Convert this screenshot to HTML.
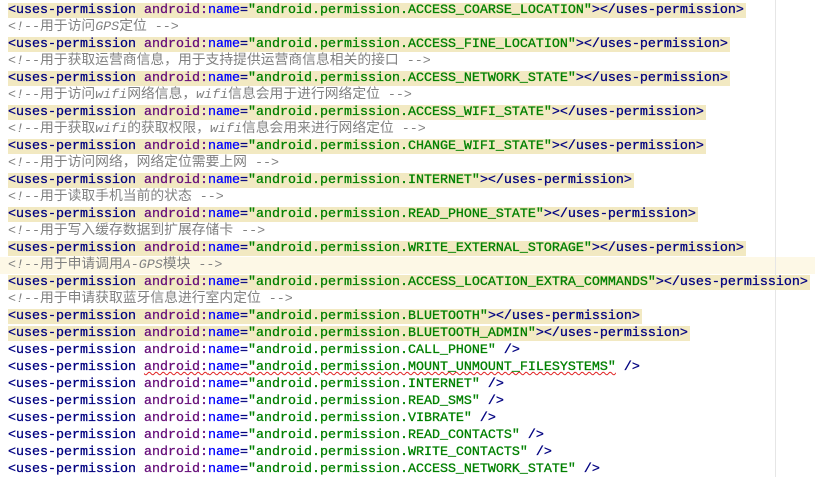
<!DOCTYPE html>
<html><head><meta charset="utf-8"><style>
html,body{margin:0;padding:0;background:#fff;width:815px;height:477px;overflow:hidden}
body{position:relative;font-family:"Liberation Mono","Noto Sans CJK SC",monospace;font-size:13.33px;font-weight:normal}
.m{position:absolute;left:775px;top:0;width:1px;height:477px;background:#e6e6e6}
.cur{position:absolute;left:0;width:815px;height:17px;background:#fdf8e6}
.l{position:absolute;left:6px;height:17px;line-height:17px;white-space:pre;padding-left:2px}
.k{-webkit-text-stroke:0.3px currentColor}
.h{background:#f2e9c2;padding-right:2px}
.t{color:#000080}.a{color:#660e7a}.n{color:#0000ff}.s{color:#008000}
.c{color:#808080;font-style:italic;font-weight:normal}
.c b{font-weight:normal;font-style:normal;font-size:13.8px}
.u{text-decoration:underline wavy #e02020;text-decoration-thickness:1px}
</style></head><body>
<div class="cur" style="top:257px"></div>
<div class="m"></div>
<div id="c"></div>
<script>
var L=[
["h","ACCESS_COARSE_LOCATION"],["c","用于访问GPS定位"],
["h","ACCESS_FINE_LOCATION"],["c","用于获取运营商信息，用于支持提供运营商信息相关的接口"],
["h","ACCESS_NETWORK_STATE"],["c","用于访问wifi网络信息，wifi信息会用于进行网络定位"],
["h","ACCESS_WIFI_STATE"],["c","用于获取wifi的获取权限，wifi信息会用来进行网络定位"],
["h","CHANGE_WIFI_STATE"],["c","用于访问网络，网络定位需要上网"],
["h","INTERNET"],["c","用于读取手机当前的状态"],
["h","READ_PHONE_STATE"],["c","用于写入缓存数据到扩展存储卡"],
["h","WRITE_EXTERNAL_STORAGE"],["c","用于申请调用A-GPS模块"],
["h","ACCESS_LOCATION_EXTRA_COMMANDS"],["c","用于申请获取蓝牙信息进行室内定位"],
["h","BLUETOOTH"],["h","BLUETOOTH_ADMIN"],
["p","CALL_PHONE"],["p","MOUNT_UNMOUNT_FILESYSTEMS",1],["p","INTERNET"],["p","READ_SMS"],["p","VIBRATE"],["p","READ_CONTACTS"],["p","WRITE_CONTACTS"],["p","ACCESS_NETWORK_STATE"]];
var h="";
L.forEach(function(x,i){var top=2+i*17;
if(x[0]=="c"){var t=x[1].replace(/([^\x00-\x7f]+)/g,'<b>$1</b>');h+='<div class="l c" style="top:'+top+'px">&lt;!--'+t+' --&gt;</div>';return;}
var an=x[2]?'<span class="u"><span class="a">android:</span><span class="n">name</span>=<span class="s">"android.permission.'+x[1]+'"</span></span>':'<span class="a">android:</span><span class="n">name</span>=<span class="s">"android.permission.'+x[1]+'"</span>';
var body='<span class="t">&lt;uses-permission </span>'+an.replace('=<span','<span class="t">=</span><span');
if(x[0]=="h"){h+='<div class="l k" style="top:'+top+'px"><span class="h">'+body+'<span class="t">&gt;&lt;/uses-permission&gt;</span></span></div>';}
else{h+='<div class="l k" style="top:'+top+'px">'+body+'<span class="t"> /&gt;</span></div>';}
});
document.getElementById("c").innerHTML=h;
</script>
</body></html>
